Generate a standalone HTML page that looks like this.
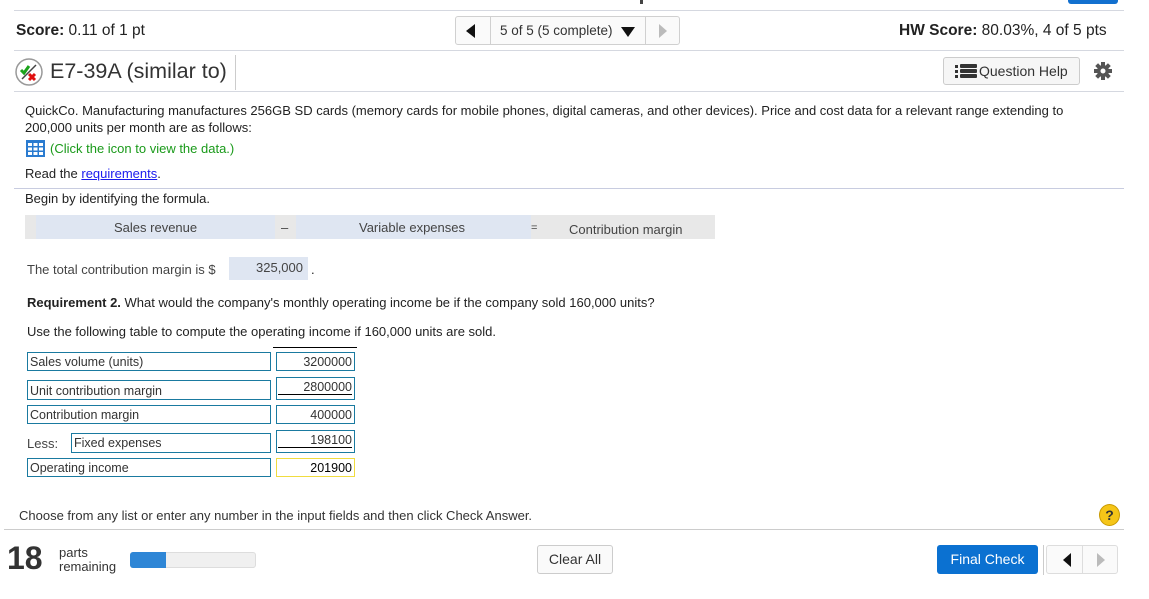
<!DOCTYPE html>
<html><head><meta charset="utf-8"><style>
*{margin:0;padding:0;box-sizing:border-box}
body{width:1149px;height:599px;background:#fff;font-family:"Liberation Sans",Arial,sans-serif;color:#222;position:relative;overflow:hidden}
.a{position:absolute;white-space:nowrap}
.hl{position:absolute;height:1px;background:#d5d8e0}
.f13{font-size:13px}
.box{position:absolute;border:1px solid #1a7aa0;font-size:12.5px;color:#333;padding:2px 2px;line-height:14px}
.vb{text-align:right}
</style></head><body>
<div class="a" style="left:1068px;top:-4px;width:50px;height:8px;background:#1270cf;border-radius:3px"></div>
<div class="a" style="left:640px;top:-6px;width:3px;height:10px;background:#444"></div>
<div class="hl" style="left:14px;top:10px;width:1110px"></div>
<div class="a" style="left:16px;top:22px;font-size:15.5px"><b>Score:</b> 0.11 of 1 pt</div>
<div class="a" style="left:455px;top:16px;width:225px;height:29px;border:1px solid #d0d0d0;border-radius:3px;background:#fafafa"></div>
<div class="a" style="left:490px;top:16px;width:1px;height:29px;background:#d0d0d0"></div>
<div class="a" style="left:645px;top:16px;width:1px;height:29px;background:#d0d0d0"></div>
<div class="a" style="left:466px;top:24px;width:0;height:0;border-top:7px solid transparent;border-bottom:7px solid transparent;border-right:9px solid #111"></div>
<div class="a" style="left:500px;top:23px;font-size:13.5px;color:#333">5 of 5 (5 complete)</div>
<div class="a" style="left:621px;top:27px;width:0;height:0;border-left:7px solid transparent;border-right:7px solid transparent;border-top:10px solid #111"></div>
<div class="a" style="left:659px;top:24px;width:0;height:0;border-top:7px solid transparent;border-bottom:7px solid transparent;border-left:8px solid #bbb"></div>
<div class="a" style="left:899px;top:22px;font-size:15.5px"><b>HW Score:</b> 80.03%, 4 of 5 pts</div>
<div class="hl" style="left:14px;top:50px;width:1110px"></div>
<svg class="a" style="left:14px;top:57px" width="30" height="30" viewBox="0 0 30 30"><circle cx="15" cy="15" r="13" fill="#fff" stroke="#999" stroke-width="1.5"/><path d="M7 13l3 3 5-7" stroke="#1ba31b" stroke-width="3" fill="none"/><path d="M8 22L22 8" stroke="#444" stroke-width="1.5"/><path d="M15 17l6 6M21 17l-6 6" stroke="#e01010" stroke-width="3"/></svg>
<div class="a" style="left:50px;top:59px;font-size:21.5px;color:#333">E7-39A (similar to)</div>
<div class="a" style="left:235px;top:55px;width:1px;height:35px;background:#ccc"></div>
<div class="a" style="left:943px;top:57px;width:137px;height:28px;border:1px solid #ccc;border-radius:3px;background:#f6f6f6"></div>
<svg class="a" style="left:955px;top:64px" width="22" height="14"><g fill="#333"><rect x="0" y="1" width="3" height="3"/><rect x="0" y="6" width="3" height="3"/><rect x="0" y="11" width="3" height="3"/><rect x="5" y="0" width="17" height="4" rx="1"/><rect x="5" y="5" width="17" height="4" rx="1"/><rect x="5" y="10" width="17" height="4" rx="1"/></g></svg>
<div class="a" style="left:979px;top:63px;font-size:14px;color:#333">Question Help</div>
<svg class="a" style="left:1094px;top:62px" width="18" height="18" viewBox="0 0 18 18"><g fill="#555"><circle cx="9" cy="9" r="6"/><rect x="7" y="0" width="4" height="18"/><rect x="0" y="7" width="18" height="4"/><rect x="7" y="0" width="4" height="18" transform="rotate(45 9 9)"/><rect x="7" y="0" width="4" height="18" transform="rotate(-45 9 9)"/></g><circle cx="9" cy="9" r="2.5" fill="#fff"/></svg>
<div class="hl" style="left:14px;top:91px;width:1110px"></div>
<div class="a f13" style="left:25px;top:102px;line-height:17px;white-space:normal;width:1060px">QuickCo. Manufacturing manufactures 256GB SD cards (memory cards for mobile phones, digital cameras, and other devices). Price and cost data for a relevant range extending to 200,000 units per month are as follows:</div>
<svg class="a" style="left:26px;top:140px" width="19" height="17"><rect width="19" height="17" fill="#2a7bd0"/><g fill="#fff"><rect x="2" y="3" width="4" height="3"/><rect x="7.5" y="3" width="4" height="3"/><rect x="13" y="3" width="4" height="3"/><rect x="2" y="7.5" width="4" height="3"/><rect x="7.5" y="7.5" width="4" height="3"/><rect x="13" y="7.5" width="4" height="3"/><rect x="2" y="12" width="4" height="3"/><rect x="7.5" y="12" width="4" height="3"/><rect x="13" y="12" width="4" height="3"/></g></svg>
<div class="a f13" style="left:50px;top:141px;color:#1a9a1a">(Click the icon to view the data.)</div>
<div class="a f13" style="left:25px;top:166px">Read the <span style="color:#1a1aee;text-decoration:underline">requirements</span>.</div>
<div class="hl" style="left:14px;top:188px;width:1110px;background:#c8cce0"></div>
<div class="a f13" style="left:25px;top:191px">Begin by identifying the formula.</div>
<div class="a" style="left:25px;top:215px;width:690px;height:24px;background:#e8e8e8"></div>
<div class="a" style="left:36px;top:215px;width:239px;height:24px;background:#dfe6f2"></div>
<div class="a" style="left:296px;top:215px;width:235px;height:24px;background:#dfe6f2"></div>
<div class="a f13" style="left:114px;top:220px;color:#444">Sales revenue</div>
<div class="a f13" style="left:281px;top:220px;color:#444">–</div>
<div class="a f13" style="left:359px;top:220px;color:#444">Variable expenses</div>
<div class="a f13" style="left:531px;top:222px;color:#444;font-size:11px">=</div>
<div class="a f13" style="left:569px;top:222px;color:#444">Contribution margin</div>
<div class="a f13" style="left:27px;top:262px;color:#444">The total contribution margin is $</div>
<div class="a" style="left:229px;top:257px;width:79px;height:23px;background:#dfe6f2"></div>
<div class="a f13" style="left:256px;top:260px;color:#444">325,000</div>
<div class="a f13" style="left:311px;top:262px">.</div>
<div class="a f13" style="left:27px;top:295px"><b>Requirement 2.</b> What would the company's monthly operating income be if the company sold 160,000 units?</div>
<div class="a f13" style="left:27px;top:324px">Use the following table to compute the operating income if 160,000 units are sold.</div>
<div class="a" style="left:273px;top:347px;width:84px;height:1px;background:#000"></div>
<div class="box" style="left:27px;top:352px;width:244px;height:19px">Sales volume (units)</div>
<div class="box vb" style="left:276px;top:352px;width:79px;height:19px">3200000</div>
<div class="box" style="left:27px;top:380px;width:244px;height:20px;padding-top:3px">Unit contribution margin</div>
<div class="box vb" style="left:276px;top:377px;width:79px;height:23px">2800000</div>
<div class="a" style="left:278px;top:394px;width:74px;height:1px;background:#000"></div>
<div class="box" style="left:27px;top:405px;width:244px;height:19px">Contribution margin</div>
<div class="box vb" style="left:276px;top:405px;width:79px;height:19px">400000</div>
<div class="a f13" style="left:27px;top:436px;color:#444">Less:</div>
<div class="box" style="left:71px;top:433px;width:200px;height:20px">Fixed expenses</div>
<div class="box vb" style="left:276px;top:430px;width:79px;height:23px">198100</div>
<div class="a" style="left:278px;top:447px;width:74px;height:1px;background:#000"></div>
<div class="box" style="left:27px;top:458px;width:244px;height:19px">Operating income</div>
<div class="box vb" style="left:276px;top:458px;width:79px;height:19px;border-color:#f0dc40;color:#000">201900</div>
<div class="a f13" style="left:19px;top:508px;color:#333">Choose from any list or enter any number in the input fields and then click Check Answer.</div>
<div class="a" style="left:1099px;top:504px;width:21px;height:22px;border-radius:50%;background:#f5c518;border:1px solid #c99a00;font-size:14px;font-weight:bold;text-align:center;line-height:20px;color:#333">?</div>
<div class="hl" style="left:4px;top:529px;width:1120px;background:#ccc"></div>
<div class="a" style="left:7px;top:540px;font-size:32px;font-weight:bold;color:#333">18</div>
<div class="a" style="left:59px;top:546px;font-size:13px;line-height:14px;color:#333">parts<br>remaining</div>
<div class="a" style="left:130px;top:552px;width:126px;height:16px;border-radius:3px;background:#f0f0f0;border:1px solid #ddd"></div>
<div class="a" style="left:130px;top:552px;width:36px;height:16px;border-radius:3px 0 0 3px;background:#2e86d6"></div>
<div class="a" style="left:537px;top:545px;width:76px;height:29px;border:1px solid #ccc;border-radius:3px;background:#fafafa;font-size:14px;text-align:center;line-height:27px;color:#333">Clear All</div>
<div class="a" style="left:937px;top:545px;width:101px;height:29px;border-radius:3px;background:#0b71d1;font-size:14px;text-align:center;line-height:29px;color:#fff">Final Check</div>
<div class="a" style="left:1043px;top:545px;width:1px;height:30px;background:#ccc"></div>
<div class="a" style="left:1046px;top:545px;width:72px;height:29px;border:1px solid #ddd;border-radius:3px;background:#fafafa"></div>
<div class="a" style="left:1082px;top:545px;width:1px;height:29px;background:#ddd"></div>
<div class="a" style="left:1063px;top:553px;width:0;height:0;border-top:7px solid transparent;border-bottom:7px solid transparent;border-right:8px solid #111"></div>
<div class="a" style="left:1097px;top:553px;width:0;height:0;border-top:7px solid transparent;border-bottom:7px solid transparent;border-left:8px solid #bbb"></div>
</body></html>
